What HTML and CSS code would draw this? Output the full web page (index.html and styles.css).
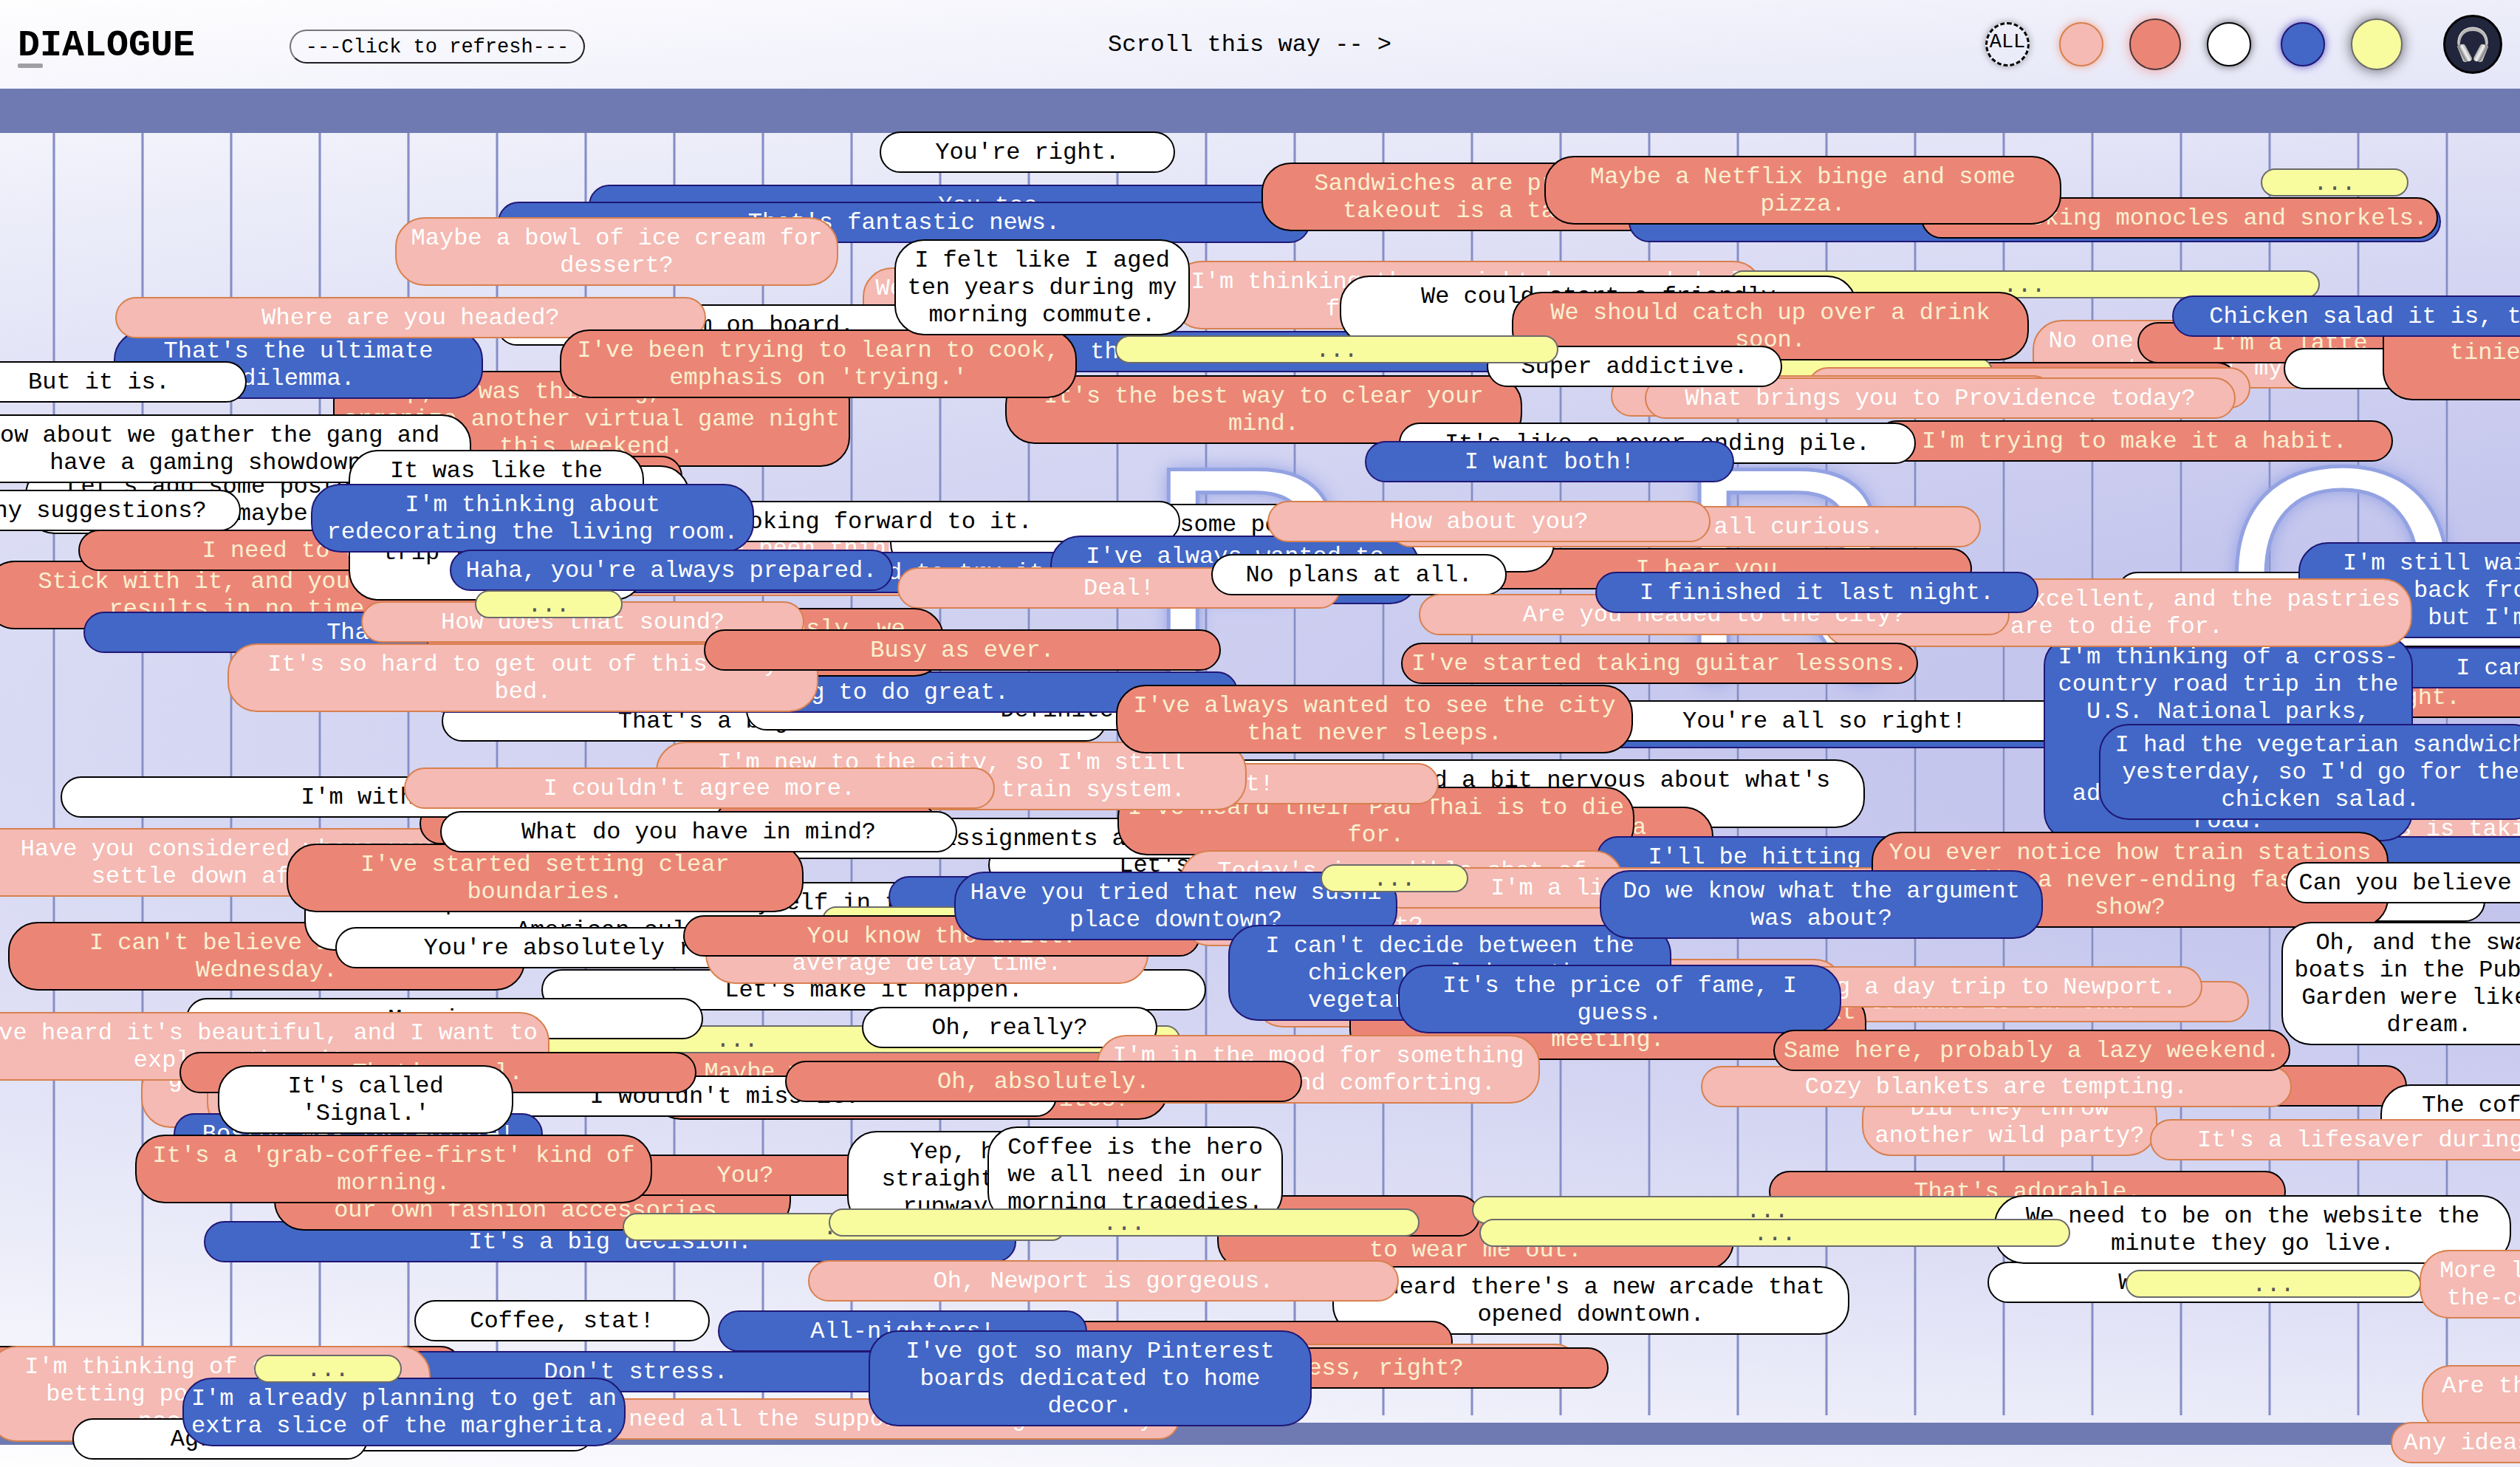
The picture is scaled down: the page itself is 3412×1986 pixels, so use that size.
FILE: index.html
```html
<!DOCTYPE html>
<html lang="en">
<head>
<meta charset="utf-8">
<title>Dialogue</title>
<link rel="stylesheet" href="styles.css">
</head>
<body>
<header class="topbar">
  <h1 class="brand">DIALOGUE</h1>
  <button class="refresh" type="button">---Click to refresh---</button>
  <p class="hint">Scroll this way -- &gt;</p>
  <nav class="filters" aria-label="Filter bubbles by colour">
    <button class="dot all" type="button">ALL</button>
    <button class="dot pink" type="button" aria-label="Pink"></button>
    <button class="dot coral large" type="button" aria-label="Coral"></button>
    <button class="dot white" type="button" aria-label="White"></button>
    <button class="dot blue" type="button" aria-label="Blue"></button>
    <button class="dot yellow large" type="button" aria-label="Yellow"></button>
  </nav>
  <button class="sound" type="button" aria-label="Toggle sound">
    <svg viewBox="0 0 44 50" width="44" height="50" aria-hidden="true">
      <defs>
        <linearGradient id="cup" x1="0" x2="1" y1="0" y2="0">
          <stop offset="0" stop-color="#a5a5a5"/><stop offset=".4" stop-color="#f4f4f4"/><stop offset="1" stop-color="#a8a8a8"/>
        </linearGradient>
      </defs>
      <path d="M2 27C0 11 9 2 22 2s22 9 20 25l-3 1C40 14 33 7 22 7S4 14 5 28z" fill="#b9b7b6"/>
      <path d="M2 25C1 11 10 2 22 2s21 9 20 23" fill="none" stroke="#e6e4e2" stroke-width="1"/>
      <g id="left-cup">
        <path d="M1 28c1-2 4-2 5 0l9 18c0 2-1 3-3 3l-3-1z" fill="#cfcfcf"/>
        <rect x="6" y="24" width="8" height="25" rx="4" transform="rotate(-26 10 37)" fill="#909090"/>
        <rect x="9" y="24" width="8" height="25" rx="4" transform="rotate(-28 13 37)" fill="url(#cup)"/>
      </g>
      <g transform="matrix(-1 0 0 1 44 0)">
        <path d="M1 28c1-2 4-2 5 0l9 18c0 2-1 3-3 3l-3-1z" fill="#cfcfcf"/>
        <rect x="6" y="24" width="8" height="25" rx="4" transform="rotate(-26 10 37)" fill="#909090"/>
        <rect x="9" y="24" width="8" height="25" rx="4" transform="rotate(-28 13 37)" fill="url(#cup)"/>
      </g>
    </svg>
  </button>
</header>
<div class="rail"></div>
<main class="stage"></main>
<div class="rail thin"></div>
<footer class="foot"></footer>

<div class="letters" aria-hidden="true"><span>P</span><span>R</span><span>O</span></div>

<div class="canvas">
  <p class="b blue w1100" style="left:797px;top:250px">You too.</p>
  <p class="b blue w1100" style="left:674px;top:273px">That's fantastic news.</p>
  <p class="b coral w700" style="left:1708px;top:220px">Sandwiches are practical, but<br>takeout is a tasty treat.</p>
  <p class="b blue w1100" style="left:2205px;top:272px"></p>
  <p class="b coral w700" style="left:2601px;top:267px">Like rocking monocles and snorkels.</p>
  <p class="b coral w700" style="left:2091px;top:211px">Maybe a Netflix binge and some<br>pizza.</p>
  <p class="b yellow w200" style="left:3061px;top:228px">...</p>
  <p class="b white w400" style="left:1191px;top:178px">You're right.</p>
  <p class="b pink w600" style="left:535px;top:294px">Maybe a bowl of ice cream for<br>dessert?</p>
  <p class="b pink w400" style="left:1168px;top:362px">We could always try<br>it out.</p>
  <p class="b pink w800" style="left:1587px;top:353px">I'm thinking there might be a good deal<br>for us at the store.</p>
  <p class="b white w700" style="left:672px;top:412px">I am on board.</p>
  <p class="b blue w1100" style="left:955px;top:448px">I'll be there soon.</p>
  <p class="b yellow w800" style="left:2341px;top:366px">...</p>
  <p class="b white w700" style="left:1814px;top:373px">We could start a friendly<br>rivalry.</p>

  <p class="b pink w600" style="left:2752px;top:433px">No one even noticed I was out<br>to be at my place.</p>
  <p class="b coral w700" style="left:2330px;top:490px"></p>
  <p class="b yellow w600" style="left:2098px;top:484px"></p>
  <p class="b pink w600" style="left:2447px;top:497px"></p>
  <p class="b pink w600" style="left:2181px;top:508px"></p>
  <p class="b coral w700" style="left:2894px;top:436px">I'm a latte person myself.</p>
  <p class="b white w400" style="left:3092px;top:471px"></p>
  <p class="b coral w700" style="left:3226px;top:412px">We just moved into the<br>tiniest apartment in the US<br>though.</p>
  <p class="b blue w600" style="left:2941px;top:400px">Chicken salad it is, then!</p>
  <p class="b coral w700" style="left:2047px;top:395px">We should catch up over a drink<br>soon.</p>
  <p class="b pink w800" style="left:2227px;top:511px">What brings you to Providence today?</p>
  <p class="b coral w700" style="left:1361px;top:508px">It's the best way to clear your<br>mind.</p>
  <p class="b white w400" style="left:2013px;top:468px">Super addictive.</p>
  <p class="b yellow w600" style="left:1510px;top:454px">...</p>
  <p class="b coral w700" style="left:2540px;top:569px">I'm trying to make it a habit.</p>
  <p class="b white w700" style="left:1894px;top:572px">It's like a never ending pile.</p>
  <p class="b blue w500" style="left:1848px;top:597px">I want both!</p>

  <p class="b coral w700" style="left:451px;top:502px">Yep, I was thinking, we should<br>organize another virtual game night<br>this weekend.</p>
  <p class="b blue w500" style="left:154px;top:447px">That's the ultimate<br>dilemma.</p>
  <p class="b pink w800" style="left:156px;top:402px">Where are you headed?</p>
  <p class="b white w400" style="left:-66px;top:489px">But it is.</p>
  <p class="b coral w700" style="left:758px;top:446px">I've been trying to learn to cook,<br>emphasis on 'trying.'</p>
  <p class="b white w400" style="left:1211px;top:324px">I felt like I aged<br>ten years during my<br>morning commute.</p>

  <p class="b coral w700" style="left:224px;top:617px"></p>
  <p class="b white w900" style="left:34px;top:630px">Let's add some posters, and some new wall<br>decor, maybe some fairy lights.</p>
  <p class="b coral w700" style="left:-20px;top:759px">Stick with it, and you'll see<br>results in no time.</p>
  <p class="b coral w700" style="left:106px;top:717px">I need to try that.</p>
  <p class="b white w700" style="left:-62px;top:561px">How about we gather the gang and<br>have a gaming showdown?</p>
  <p class="b white w400" style="left:-74px;top:663px">Any suggestions?</p>
  <p class="b blue w1100" style="left:113px;top:828px">That's such a big deal.</p>
  <p class="b pink w800" style="left:800px;top:714px">I've been thinking about the<br>whole thing.</p>
  <p class="b coral w700" style="left:1970px;top:742px">I hear you.</p>
  <p class="b white w900" style="left:1205px;top:682px">Let's put up some posters on the<br>walls.</p>
  <p class="b white w900" style="left:698px;top:678px">I'm looking forward to it.</p>
  <p class="b blue w1100" style="left:700px;top:747px">I've decided to try it out.</p>
  <p class="b blue w500" style="left:1422px;top:725px">I've always wanted to<br>try it.</p>
  <p class="b pink w800" style="left:1882px;top:685px">We are honestly all curious.</p>
  <p class="b pink w600" style="left:1716px;top:678px">How about you?</p>
  <p class="b pink w600" style="left:1215px;top:768px">Deal!</p>
  <p class="b white w400" style="left:1640px;top:750px">No plans at all.</p>
  <p class="b white w400" style="left:472px;top:609px">It was like the<br>universe was<br>planning this<br>trip to surprise<br>me.</p>
  <p class="b blue w600" style="left:421px;top:655px">I'm thinking about<br>redecorating the living room.</p>
  <p class="b blue w600" style="left:609px;top:744px">Haha, you're always prepared.</p>

  <p class="b white w900" style="left:598px;top:948px">That's a big decision.</p>
  <p class="b white w900" style="left:1010px;top:933px">Definitely.</p>
  <p class="b blue w1100" style="left:576px;top:909px">You're going to do great.</p>
  <p class="b coral w700" style="left:578px;top:823px">That's a lot! But seriously, we<br>should do that.</p>
  <p class="b pink w600" style="left:489px;top:814px">How does that sound?</p>
  <p class="b pink w800" style="left:308px;top:871px">It's so hard to get out of this cozy<br>bed.</p>
  <p class="b coral w700" style="left:953px;top:852px">Busy as ever.</p>
  <p class="b yellow w200" style="left:643px;top:799px">...</p>

  <p class="b white w900" style="left:2642px;top:820px"></p>
  <p class="b white w900" style="left:2866px;top:774px"></p>
  <p class="b blue w1100" style="left:1800px;top:957px"></p>
  <p class="b white w900" style="left:2020px;top:948px">You're all so right!</p>
  <p class="b coral w700" style="left:2770px;top:916px">I'm eating in tonight.</p>
  <p class="b blue w500" style="left:3200px;top:876px">I can't wait.</p>
  <p class="b blue w600" style="left:3112px;top:734px">I'm still waiting to hear<br>back from them,<br>but I'm sure.</p>
  <p class="b white w400" style="left:2965px;top:1192px"></p>
  <p class="b pink w600" style="left:3100px;top:1094px">My boss is taking us on tour</p>
  <p class="b blue w600" style="left:3000px;top:1132px"><br></p>
  <p class="b blue w500" style="left:2767px;top:861px">I'm thinking of a cross-<br>country road trip in the<br>U.S. National parks,<br>Yosemite too,<br>to have a big<br>adventure on the whole<br>road.</p>
  <p class="b pink w800" style="left:2466px;top:783px">The food was excellent, and the pastries<br>are to die for.</p>
  <p class="b pink w800" style="left:1921px;top:804px">Are you headed to the city?</p>
  <p class="b blue w600" style="left:2160px;top:774px">I finished it last night.</p>
  <p class="b coral w700" style="left:1897px;top:870px">I've started taking guitar lessons.</p>
  <p class="b blue w600" style="left:2842px;top:980px">I had the vegetarian sandwich<br>yesterday, so I'd go for the<br>chicken salad.</p>

  <p class="b white w900" style="left:1625px;top:1028px">I'm excited and a bit nervous about what's<br>to come.</p>
  <p class="b coral w700" style="left:1620px;top:1092px">I've been wanting to find a<br>club.</p>
  <p class="b white w700" style="left:1338px;top:1143px">Let's get started.</p>
  <p class="b white w900" style="left:1046px;top:1107px">My assignments are piling up.</p>
  <p class="b coral w700" style="left:1513px;top:1065px">I've heard their Pad Thai is to die<br>for.</p>
  <p class="b pink w600" style="left:1348px;top:1033px">Love it!</p>
  <p class="b pink w800" style="left:888px;top:1004px">I'm new to the city, so I'm still<br>trying to learn the train system.</p>
  <p class="b coral w700" style="left:1511px;top:927px">I've always wanted to see the city<br>that never sleeps.</p>
  <p class="b pink w800" style="left:-65px;top:1121px">Have you considered where you'll<br>settle down afterward?</p>
  <p class="b coral w700" style="left:568px;top:1087px"></p>
  <p class="b white w900" style="left:82px;top:1051px">I'm with you.</p>
  <p class="b pink w800" style="left:547px;top:1039px">I couldn't agree more.</p>

  <p class="b coral w700" style="left:11px;top:1248px">I can't believe it's only<br>Wednesday.</p>
  <p class="b white w900" style="left:412px;top:1194px">I also plan to soon immerse myself in the<br>American culture.</p>
  <p class="b coral w700" style="left:388px;top:1142px">I've started setting clear<br>boundaries.</p>
  <p class="b white w700" style="left:596px;top:1098px">What do you have in mind?</p>
  <p class="b blue w500" style="left:1203px;top:1186px"></p>
  <p class="b yellow w400" style="left:1113px;top:1227px"></p>
  <p class="b white w700" style="left:454px;top:1255px">You're absolutely right.</p>
  <p class="b white w900" style="left:733px;top:1312px">Let's make it happen.</p>
  <p class="b pink w600" style="left:955px;top:1239px">We can guess the<br>average delay time.</p>
  <p class="b coral w700" style="left:925px;top:1239px">You know the drill.</p>
  <p class="b blue w600" style="left:2162px;top:1132px">I'll be hitting the gym.</p>
  <p class="b pink w600" style="left:1598px;top:1151px">Today's incredible shot of<br>caffeine, is this<br>it?</p>
  <p class="b pink w800" style="left:1791px;top:1174px">I'm a little late.</p>
  <p class="b blue w600" style="left:1292px;top:1180px">Have you tried that new sushi<br>place downtown?</p>
  <p class="b yellow w200" style="left:1788px;top:1170px">...</p>
  <p class="b coral w700" style="left:2534px;top:1126px">You ever notice how train stations<br>are like a never-ending fashion<br>show?</p>
  <p class="b white w400" style="left:3095px;top:1167px">Can you believe it?</p>
  <p class="b white w400" style="left:3089px;top:1248px">Oh, and the swan<br>boats in the Public<br>Garden were like a<br>dream.</p>

  <p class="b pink w800" style="left:1697px;top:1298px"><br><br></p>
  <p class="b pink w800" style="left:2245px;top:1328px">We get to make it our own.</p>
  <p class="b coral w700" style="left:1827px;top:1342px">I really can't be late for the next<br>meeting.</p>
  <p class="b pink w800" style="left:2182px;top:1308px">We are planning a day trip to Newport.</p>
  <p class="b blue w600" style="left:1663px;top:1252px">I can't decide between the<br>chicken salad or the<br>vegetarian sandwich.</p>
  <p class="b blue w600" style="left:2166px;top:1178px">Do we know what the argument<br>was about?</p>
  <p class="b blue w600" style="left:1893px;top:1306px">It's the price of fame, I<br>guess.</p>
  <p class="b pink w400" style="left:2521px;top:1472px">Did they throw<br>another wild party?</p>
  <p class="b coral w700" style="left:2559px;top:1442px"></p>
  <p class="b pink w800" style="left:2303px;top:1443px">Cozy blankets are tempting.</p>
  <p class="b coral w700" style="left:2401px;top:1394px">Same here, probably a lazy weekend.</p>
  <p class="b white w400" style="left:3223px;top:1468px">The coffee line<br>was so long.</p>
  <p class="b pink w800" style="left:2911px;top:1515px">It's a lifesaver during finals week</p>

  <p class="b coral w700" style="left:882px;top:1423px">Maybe we should bring out all<br>some old and popular favorites?</p>
  <p class="b yellow w1200" style="left:398px;top:1388px">...</p>
  <p class="b white w700" style="left:252px;top:1351px">Morning.</p>
  <p class="b white w400" style="left:1167px;top:1363px">Oh, really?</p>
  <p class="b pink w400" style="left:191px;top:1434px">getting ready for<br>it.</p>
  <p class="b pink w400" style="left:280px;top:1440px"><br><br></p>
  <p class="b pink w800" style="left:-56px;top:1370px">I've heard it's beautiful, and I want to<br>explore the city.</p>
  <p class="b white w900" style="left:531px;top:1456px">I wouldn't miss it.</p>
  <p class="b coral w700" style="left:243px;top:1424px">That's cool.</p>
  <p class="b pink w600" style="left:1485px;top:1401px">I'm in the mood for something<br>delicious and comforting.</p>
  <p class="b coral w700" style="left:1063px;top:1436px">Oh, absolutely.</p>
  <p class="b blue w500" style="left:235px;top:1507px">Boston was incredible!</p>
  <p class="b white w400" style="left:295px;top:1442px">It's called<br>'Signal.'</p>
  <p class="b blue w1100" style="left:276px;top:1653px">It's a big decision.</p>
  <p class="b coral w700" style="left:371px;top:1573px">We should start making<br>our own fashion accessories.</p>
  <p class="b coral w700" style="left:659px;top:1563px">You?</p>
  <p class="b coral w700" style="left:183px;top:1536px">It's a 'grab-coffee-first' kind of<br>morning.</p>

  <p class="b coral w700" style="left:1648px;top:1627px">This week is trying<br>to wear me out.</p>
  <p class="b coral w700" style="left:1304px;top:1618px"></p>
  <p class="b coral w700" style="left:2395px;top:1585px">That's adorable.</p>
  <p class="b yellow w800" style="left:1993px;top:1619px">...</p>
  <p class="b white w700" style="left:2691px;top:1708px">We'll be so ready.</p>
  <p class="b white w700" style="left:2700px;top:1618px">We need to be on the website the<br>minute they go live.</p>
  <p class="b yellow w800" style="left:2003px;top:1650px">...</p>
  <p class="b yellow w400" style="left:2878px;top:1719px">...</p>
  <p class="b pink w400" style="left:3276px;top:1692px">More like down-by-<br>the-corner diner.</p>
  <p class="b pink w400" style="left:3279px;top:1848px">Are there any more<br>tix?</p>
  <p class="b pink w400" style="left:3237px;top:1925px">Any ideas for this?</p>
  <p class="b white w400" style="left:1147px;top:1531px">Yep, heading<br>straight off the<br>runway today.</p>
  <p class="b white w400" style="left:1337px;top:1525px">Coffee is the hero<br>we all need in our<br>morning tragedies.</p>
  <p class="b yellow w600" style="left:843px;top:1642px">...</p>
  <p class="b yellow w800" style="left:1122px;top:1636px">...</p>
  <p class="b white w700" style="left:1804px;top:1714px">I heard there's a new arcade that<br>opened downtown.</p>
  <p class="b pink w800" style="left:1094px;top:1706px">Oh, Newport is gorgeous.</p>

  <p class="b white w400" style="left:561px;top:1760px">Coffee, stat!</p>
  <p class="b coral w700" style="left:-75px;top:1822px"></p>
  <p class="b blue w1100" style="left:311px;top:1829px">Don't stress.</p>
  <p class="b coral w700" style="left:1267px;top:1788px"></p>
  <p class="b pink w800" style="left:1335px;top:1819px"></p>
  <p class="b coral w700" style="left:1478px;top:1824px">Business, right?</p>
  <p class="b blue w500" style="left:972px;top:1774px">All-nighters!</p>
  <p class="b pink w600" style="left:-17px;top:1822px">I'm thinking of starting a<br>betting pool, it may be<br>necessary.</p>
  <p class="b white w400" style="left:405px;top:1909px"></p>
  <p class="b pink w800" style="left:797px;top:1893px">I need all the support I can get lately.</p>
  <p class="b blue w600" style="left:1176px;top:1801px">I've got so many Pinterest<br>boards dedicated to home<br>decor.</p>
  <p class="b white w400" style="left:98px;top:1920px">Agreed.</p>
  <p class="b blue w600" style="left:247px;top:1865px">I'm already planning to get an<br>extra slice of the margherita.</p>
  <p class="b yellow w200" style="left:344px;top:1834px">...</p>
</div>
</body>
</html>
```

FILE: styles.css
```css
* { box-sizing: border-box; }

body {
  margin: 0;
  position: relative;
  min-height: 100vh;
  display: flex;
  flex-direction: column;
  overflow: hidden;
  color: #000;
  font: 32px/37px "Courier New", "Liberation Mono", monospace;
  background: radial-gradient(ellipse 500vw 71vh at 350vw 50%, rgb(126, 130, 216), #fff);
}

p, h1 { margin: 0; }
button { font: inherit; color: inherit; cursor: pointer; padding: 0; }

/* top bar */
.topbar {
  height: 120px;
  padding: 0 24px;
  display: flex;
  align-items: center;
}
.brand {
  position: relative;
  width: 368px;
  padding-top: 4px;
  font-size: 50px;
  line-height: 60px;
  font-weight: 700;
}
.brand::after {
  content: "";
  position: absolute;
  left: 0;
  bottom: 0;
  width: 34px;
  height: 6px;
  border-radius: 2px;
  background: #a0a0a3;
}
.refresh {
  width: 400px;
  height: 46px;
  margin-top: 6px;
  padding-top: 2px;
  border: 2px solid;
  border-color: #76767a #1f1f22 #1f1f22 #76767a;
  border-radius: 23px;
  background: transparent;
  font-size: 27px;
}
.hint { flex: 1; padding-left: 708px; }

.filters { display: flex; align-items: center; }
.dot {
  width: 60px;
  height: 60px;
  margin: 0 20px;
  border-radius: 50%;
  border: 2px solid;
}
.dot.large { width: 70px; height: 70px; margin: 0 15px; }
.dot.all {
  border: 3px dashed #000;
  background: transparent;
  font-size: 27px;
  line-height: 30px;
  padding-bottom: 6px;
  box-shadow: 0 0 10px rgba(0, 0, 0, .35);
}
.dot.coral { border-color: #4a3436; box-shadow: 0 0 16px #f39a94; }
.dot.pink { box-shadow: 0 0 12px #f0a58e; }
.dot.white { box-shadow: 0 0 12px rgba(0, 0, 0, .6); }
.dot.blue { box-shadow: 0 0 12px #5a4fc0; }
.dot.yellow { box-shadow: 0 0 18px rgba(0, 0, 0, .6); }
.sound {
  width: 80px;
  height: 80px;
  margin-left: 40px;
  display: flex;
  align-items: center;
  justify-content: center;
  border: 3px solid #000;
  border-radius: 50%;
  background: #22263c;
}

/* ruled area between the two rails */
.rail { height: 60px; background: #6e7ab1; }
.rail.thin { height: 30px; margin-top: 10px; }
.foot { height: 30px; }
.stage {
  flex: 1;
  background: repeating-linear-gradient(90deg,
    transparent 0 71px, #b3b8e0 71px 72px, #868fc5 72px 74px, #b3b8e0 74px 75px, transparent 75px 120px);
}

.letters {
  position: absolute;
  left: 1548px;
  top: 549px;
  display: flex;
  gap: 440px;
  font: 418px/460px "Liberation Sans", sans-serif;
  color: #fff;
  -webkit-text-stroke: 5px #93a2e2;
  text-shadow: 0 0 24px #8b9ae0;
}

/* speech bubbles */
.canvas { position: absolute; inset: 0; overflow: hidden; }
.b {
  position: absolute;
  min-height: 56px;
  padding: 8px 0 7px;
  border: 2px solid;
  border-radius: 40px;
  text-align: center;
  white-space: nowrap;
}
.b.yellow {
  height: 38px;
  min-height: 38px;
  padding: 0;
}

.white { background: #fff; color: #000; border-color: #000; }
.blue { background: #4267c7; color: #fff; border-color: #1f1774; }
.coral { background: #eb8676; color: #faf0d0; border-color: #000; }
.pink { background: #f4bab3; color: #fff; border-color: #d8804f; }
.yellow { background: #f8fc9f; color: #555; border-color: #6b6b6b; }

.w200 { width: 200px; }
.w400 { width: 400px; }
.w500 { width: 500px; }
.w600 { width: 600px; }
.w700 { width: 700px; }
.w800 { width: 800px; }
.w900 { width: 900px; }
.w1100 { width: 1100px; }
.w1200 { width: 1200px; }
```
